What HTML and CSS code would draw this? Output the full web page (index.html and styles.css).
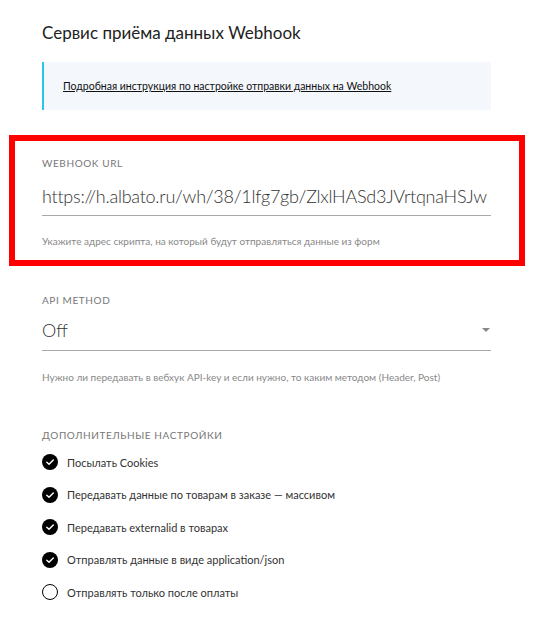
FILE: index.html
```html
<!DOCTYPE html>
<html lang="ru">
<head>
<meta charset="utf-8">
<title>Webhook</title>
<link rel="stylesheet" href="styles.css">
</head>
<body>
<div class="page">
  <h1 class="title">Сервис приёма данных Webhook</h1>
  <div class="info">
    <a class="info-link" href="#">Подробная инструкция по настройке отправки данных на Webhook</a>
  </div>

  <section class="field highlight">
    <div class="label">WEBHOOK URL</div>
    <div class="input url">https://h.albato.ru/wh/38/1lfg7gb/ZlxlHASd3JVrtqnaHSJw</div>
    <div class="hint">Укажите адрес скрипта, на который будут отправляться данные из форм</div>
  </section>

  <section class="field api">
    <div class="label">API METHOD</div>
    <div class="input select">
      <span>Off</span>
      <span class="caret"></span>
    </div>
    <div class="hint">Нужно ли передавать в вебхук API-key и если нужно, то каким методом (Header, Post)</div>
  </section>

  <section class="extra">
    <div class="label">ДОПОЛНИТЕЛЬНЫЕ НАСТРОЙКИ</div>
    <ul class="checks">
      <li class="check on"><span class="box"><svg viewBox="0 0 16 16" width="16" height="16"><path d="M4.8 8.2 L7 10.3 L11.3 5.9" fill="none" stroke="#fff" stroke-width="1.4" stroke-linecap="round" stroke-linejoin="round"/></svg></span>Посылать Cookies</li>
      <li class="check on"><span class="box"><svg viewBox="0 0 16 16" width="16" height="16"><path d="M4.8 8.2 L7 10.3 L11.3 5.9" fill="none" stroke="#fff" stroke-width="1.4" stroke-linecap="round" stroke-linejoin="round"/></svg></span>Передавать данные по товарам в заказе — массивом</li>
      <li class="check on"><span class="box"><svg viewBox="0 0 16 16" width="16" height="16"><path d="M4.8 8.2 L7 10.3 L11.3 5.9" fill="none" stroke="#fff" stroke-width="1.4" stroke-linecap="round" stroke-linejoin="round"/></svg></span>Передавать externalid в товарах</li>
      <li class="check on"><span class="box"><svg viewBox="0 0 16 16" width="16" height="16"><path d="M4.8 8.2 L7 10.3 L11.3 5.9" fill="none" stroke="#fff" stroke-width="1.4" stroke-linecap="round" stroke-linejoin="round"/></svg></span>Отправлять данные в виде application/json</li>
      <li class="check"><span class="box"></span>Отправлять только после оплаты</li>
    </ul>
  </section>
</div>
</body>
</html>
```
FILE: styles.css
```css
* { box-sizing: border-box; }
html, body { margin: 0; padding: 0; background: #fff; }
body {
  font-family: "Lato", "Liberation Sans", sans-serif;
  color: #222;
}
.page {
  width: 537px;
  padding: 21px 46px 0 42px;
}
.title {
  margin: 0;
  font-size: 17px;
  line-height: 24px;
  font-weight: 400;
  color: #222;
}
.info {
  margin-top: 17px;
  height: 48px;
  background: #f4f8fd;
  border-left: 2px solid #2bc5e6;
  padding: 0 19px;
  display: flex;
  align-items: center;
}
.info-link {
  font-size: 10.5px;
  line-height: 14px;
  color: #111;
  text-decoration: underline;
}
.field { display: flex; flex-direction: column; }
.highlight {
  margin: 25px -34px 0 -33px;
  border: 6px solid #ff0000;
  padding: 15px 28px 12px 27px;
}
.label {
  font-size: 10px;
  line-height: 14px;
  letter-spacing: 0.6px;
  color: #777;
  text-transform: uppercase;
}
.input {
  margin-top: 14px;
  font-size: 18px;
  line-height: 24px;
  font-weight: 300;
  color: #333;
  padding-bottom: 7px;
  border-bottom: 1px solid #aaa;
  white-space: nowrap;
  overflow: hidden;
}
.url { letter-spacing: -0.25px; }
.hint {
  margin-top: 18px;
  font-size: 10px;
  line-height: 14px;
  color: #888;
}
.api { margin-top: 27px; }
.api .input { margin-top: 11px; padding-bottom: 8px; }
.api .hint { margin-top: 19px; }
.select {
  display: flex;
  align-items: center;
  justify-content: space-between;
}
.caret {
  width: 0; height: 0;
  margin-right: 1px;
  border-left: 4px solid transparent;
  border-right: 4px solid transparent;
  border-top: 4px solid #888;
}
.extra { margin-top: 44px; }
.checks {
  list-style: none;
  margin: 10px 0 0;
  padding: 0;
  display: flex;
  flex-direction: column;
  gap: 12.5px;
}
.check {
  display: flex;
  align-items: center;
  gap: 9px;
  height: 20px;
  font-size: 11px;
  color: #333;
}
.box {
  width: 16px; height: 16px;
  border-radius: 50%;
  border: 1.5px solid #000;
  flex: none;
  display: flex;
}
.check.on .box { background: #000; border: none; }
```
